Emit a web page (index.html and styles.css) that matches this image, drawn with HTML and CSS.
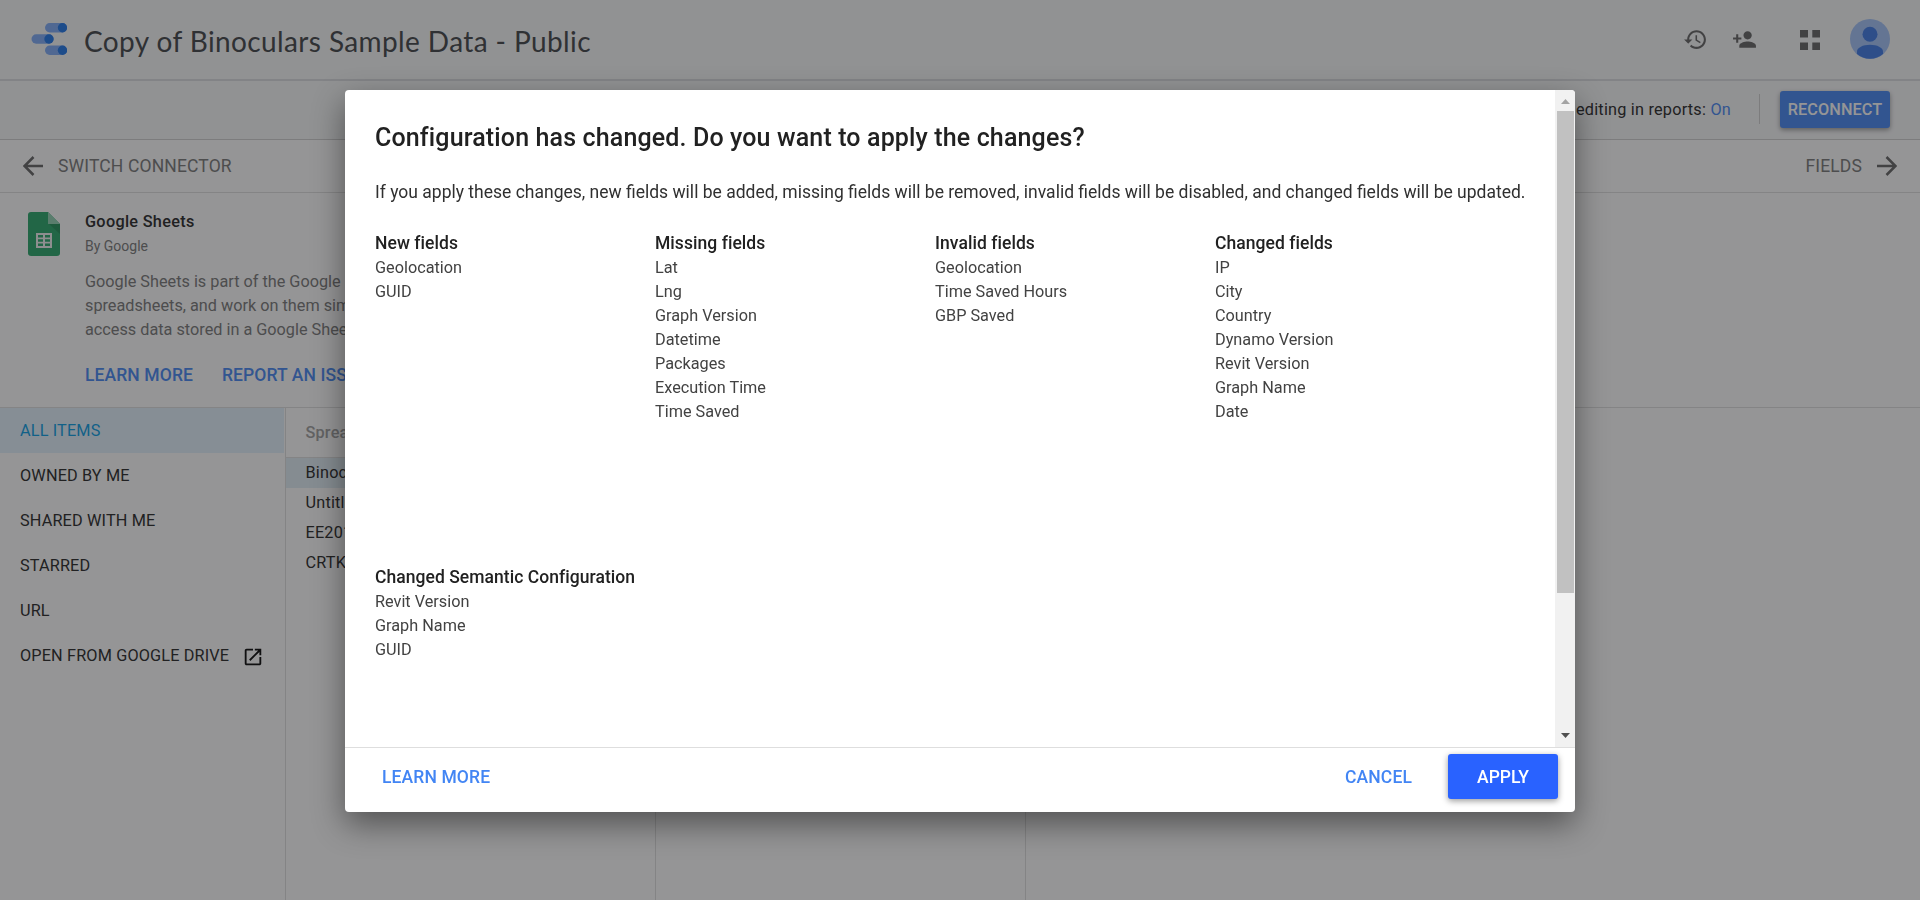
FILE: index.html
```html
<!DOCTYPE html>
<html lang="en">
<head>
<meta charset="utf-8">
<title>Copy of Binoculars Sample Data - Public</title>
<link rel="stylesheet" href="styles.css">
</head>
<body>
<div class="page">
  <header class="header">
    <svg class="logo" width="36" height="34" viewBox="0 0 36 34">
      <g fill="#7baaf7"><rect x="14" y="1" width="22" height="9.4" rx="4.7"/><rect x="0.5" y="12.3" width="22" height="9.4" rx="4.7"/><rect x="14" y="23.6" width="22" height="9.4" rx="4.7"/></g>
      <g fill="#1a73e8"><circle cx="31.5" cy="5.7" r="4.7"/><circle cx="18" cy="17" r="4.7"/><circle cx="31.5" cy="28.3" r="4.7"/></g>
    </svg>
    <h1 class="doc-title">Copy of Binoculars Sample Data - Public</h1>
    <div class="header-icons">
      <svg class="icon-history" width="25" height="25" viewBox="0 0 24 24"><path d="M13 3c-4.970 0-9 4.030-9 9H1l3.890 3.890.07.140L9 12H6c0-3.870 3.130-7 7-7s7 3.130 7 7-3.130 7-7 7c-1.930 0-3.680-.79-4.940-2.060l-1.420 1.420C8.270 19.990 10.510 21 13 21c4.970 0 9-4.030 9-9s-4.030-9-9-9zm-1 5v5l4.280 2.540.72-1.210-3.500-2.080V8H12z"/></svg>
      <svg class="icon-person" width="25" height="25" viewBox="0 0 24 24"><path d="M15 12c2.210 0 4-1.790 4-4s-1.790-4-4-4-4 1.790-4 4 1.790 4 4 4zm-9-2V7H4v3H1v2h3v3h2v-3h3v-2H6zm9 4c-2.670 0-8 1.340-8 4v2h16v-2c0-2.660-5.330-4-8-4z"/></svg>
      <svg class="icon-grid" width="20" height="20" viewBox="0 0 20 20"><path d="M0 0h8v7.500h-8zM12.300 0h7.700v7.500h-7.700zM0 12.500h8v7.500h-8zM12.300 12.500h7.700v7.500h-7.700z"/></svg>
      <svg class="avatar" width="40" height="40" viewBox="0 0 40 40"><circle cx="20" cy="20" r="20" fill="#a1c2fa"/><circle cx="20" cy="15.300" r="7.500" fill="#3b78e7"/><path fill="#3b78e7" d="M7 35v-2.500c0-4 6-6.800 13-6.800s13 2.800 13 6.800V35a20 20 0 0 1-26 0z"/></svg>
    </div>
  </header>
  <div class="toolbar">
    <span class="editing">Field editing in reports: <a class="link">On</a></span>
    <span class="divider"></span>
    <button class="reconnect">RECONNECT</button>
  </div>
  <nav class="steps">
    <div class="step"><svg width="20" height="20" viewBox="0 0 20 20"><path d="M20 10H2M10.500 1 1.500 10l9 9"/></svg><span class="step-switch">SWITCH CONNECTOR</span></div>
    <div class="step"><span>FIELDS</span><svg width="20" height="20" viewBox="0 0 20 20"><path d="M0 10h18M9.500 1l9 9-9 9"/></svg></div>
  </nav>
  <section class="connector">
    <svg class="sheets" width="32" height="44" viewBox="0 0 32 44">
      <path fill="#23a566" d="M3 0h17l12 12v29a3 3 0 0 1-3 3H3a3 3 0 0 1-3-3V3a3 3 0 0 1 3-3z"/>
      <path fill="#1c8f55" d="M21 12h11v10z"/><path fill="#8ed1b1" d="M20 0l12 12H20z"/>
      <path fill="#f1f1f1" d="M8 21h16v15H8z"/>
      <path fill="#23a566" d="M10 23h5v2.500h-5zM17 23h5v2.500h-5zM10 27.300h5v2.500h-5zM17 27.300h5v2.500h-5zM10 31.500h5v2.500h-5zM17 31.500h5v2.500h-5z"/>
    </svg>
    <div class="connector-info">
      <h2 class="connector-name">Google Sheets</h2>
      <p class="connector-by">By Google</p>
      <p class="connector-text">Google Sheets is part of the Google<br>spreadsheets, and work on them sim<br>access data stored in a Google Shee</p>
      <div class="connector-links"><a>LEARN MORE</a><a>REPORT AN ISSUE</a></div>
    </div>
  </section>
  <main class="browser">
    <ul class="sources">
      <li class="source source-active">ALL ITEMS</li>
      <li class="source">OWNED BY ME</li>
      <li class="source">SHARED WITH ME</li>
      <li class="source">STARRED</li>
      <li class="source">URL</li>
      <li class="source">OPEN FROM GOOGLE DRIVE <svg class="open-icon" width="22" height="22" viewBox="0 0 24 24"><path d="M19 19H5V5h7V3H5c-1.110 0-2 .9-2 2v14c0 1.100.89 2 2 2h14c1.100 0 2-.9 2-2v-7h-2v7zM14 3v2h3.590l-9.830 9.830 1.410 1.410L19 6.410V10h2V3h-7z"/></svg></li>
    </ul>
    <div class="files">
      <div class="files-head">Spreadsheet</div>
      <div class="file file-active">Binoculars</div>
      <div class="file">Untitled</div>
      <div class="file">EE2018</div>
      <div class="file">CRTKL</div>
    </div>
    <div class="column"></div>
  </main>
</div>
<div class="backdrop"></div>
<div class="dialog" role="dialog">
  <div class="dialog-scroll">
    <div class="dialog-content">
      <h2 class="dialog-title">Configuration has changed. Do you want to apply the changes?</h2>
      <p class="dialog-text">If you apply these changes, new fields will be added, missing fields will be removed, invalid fields will be disabled, and changed fields will be updated.</p>
      <div class="groups">
        <section><h3>New fields</h3><ul><li>Geolocation</li><li>GUID</li></ul></section>
        <section><h3>Missing fields</h3><ul><li>Lat</li><li>Lng</li><li>Graph Version</li><li>Datetime</li><li>Packages</li><li>Execution Time</li><li>Time Saved</li></ul></section>
        <section><h3>Invalid fields</h3><ul><li>Geolocation</li><li>Time Saved Hours</li><li>GBP Saved</li></ul></section>
        <section><h3>Changed fields</h3><ul><li>IP</li><li>City</li><li>Country</li><li>Dynamo Version</li><li>Revit Version</li><li>Graph Name</li><li>Date</li></ul></section>
        <section><h3>Changed Semantic Configuration</h3><ul><li>Revit Version</li><li>Graph Name</li><li>GUID</li></ul></section>
      </div>
    </div>
    <div class="scrollbar">
      <svg width="20" height="21" viewBox="0 0 20 21"><path fill="#a3a3a3" d="M6 14h9l-4.500-5z"/></svg>
      <div class="thumb"></div>
      <svg width="20" height="21" viewBox="0 0 20 21"><path fill="#505050" d="M6 7h9l-4.500 5z"/></svg>
    </div>
  </div>
  <footer class="dialog-actions">
    <a class="action action-learn">LEARN MORE</a>
    <a class="action action-cancel">CANCEL</a>
    <button class="apply">APPLY</button>
  </footer>
</div>
</body>
</html>
```
FILE: styles.css
```css
* { box-sizing: border-box; }
body { margin: 0; height: 900px; overflow: hidden; font: 16.25px/24px Roboto, sans-serif; color: #212121; }
h1, h2, h3, p, ul { margin: 0; padding: 0; font-weight: 400; }
ul { list-style: none; }
button { border: 0; border-radius: 3px; font-family: inherit; color: #fff; padding: 0; }
.page { height: 900px; display: flex; flex-direction: column; background: #fff; }

.header { height: 81px; flex: none; display: flex; align-items: center; padding: 0 30px 1px; background: #f8f9fa; border-bottom: 2px solid #dadce0; }
.logo { margin: 0 17px 0 1px; }
.doc-title { flex: 1; padding-top: 3px; font: 28px/36px Lato, sans-serif; letter-spacing: .39px; color: #3c4043; white-space: nowrap; }
.header-icons { display: flex; align-items: center; fill: #616161; }
.icon-history { margin-right: 24px; }
.icon-person { margin-right: 43px; }
.icon-grid { margin: 1px 30px 0 0; }

.toolbar { height: 59px; flex: none; display: flex; align-items: center; justify-content: flex-end; padding: 0 30px 2px; background: #f8f9fa; border-bottom: 1px solid #d0d0d0; letter-spacing: .22px; }
.editing { padding-top: 1px; }
.link { color: #4285f4; }
.divider { width: 1px; height: 30px; background: #d0d0d0; margin: 0 20px 0 28px; }
.reconnect { width: 110px; height: 37px; font-size: 16.25px; font-weight: 500; letter-spacing: .1px; background: #4285f4; box-shadow: 0 2px 5px rgba(0,0,0,.4); }

.steps { height: 53px; flex: none; display: flex; align-items: center; justify-content: space-between; padding: 0 23px; border-bottom: 1px solid #dedede; color: #757575; font-size: 17.5px; letter-spacing: .15px; }
.step { display: flex; align-items: center; gap: 15px; }
.step svg { fill: none; stroke: #616161; stroke-width: 2.5; }

.connector { height: 215px; flex: none; display: flex; align-items: flex-start; padding: 17px 28px 0; border-bottom: 1px solid #dedede; }
.sheets { margin: 2px 25px 0 0; }
.connector-name { font-size: 16.25px; font-weight: 500; letter-spacing: .3px; }
.connector-by { font-size: 14px; color: #757575; }
.connector-text { margin-top: 12px; color: #757575; }
.connector-links { display: flex; gap: 29px; margin-top: 21px; font-size: 17.5px; font-weight: 500; letter-spacing: .1px; color: #4285f4; white-space: nowrap; }

.browser { flex: 1; display: flex; }
.sources { width: 286px; border-right: 1px solid #dedede; padding-right: 1px; }
.source { height: 45px; display: flex; align-items: center; padding-left: 20px; letter-spacing: .15px; }
.source-active { background: #e3f2fd; color: #039be5; }
.open-icon { margin: 2px 0 0 13px; fill: #000; }
.files { width: 370px; border-right: 1px solid #dedede; letter-spacing: .2px; }
.files-head { height: 50px; padding: 13px 19.5px; border-bottom: 1px solid #dedede; font-weight: 500; color: #9e9e9e; }
.file { height: 30px; padding: 3px 19.5px; }
.file-active { background: #e1eef6; }
.column { width: 370px; border-right: 1px solid #dedede; }

.backdrop { position: fixed; inset: 0; background: rgba(33,33,36,.48); }
.dialog { position: absolute; left: 345px; top: 90px; width: 1230px; height: 722px; display: flex; flex-direction: column; background: #fff; border-radius: 4px; overflow: hidden; box-shadow: 0 12px 32px rgba(0,0,0,.45); }
.dialog-scroll { height: 657px; display: flex; }
.dialog-content { flex: 1; min-width: 0; padding: 33px 30px 0; }
.dialog-title { font-size: 25px; line-height: 30px; font-weight: 500; letter-spacing: .14px; white-space: nowrap; }
.dialog-text { margin-top: 27px; font-size: 17.5px; white-space: nowrap; color: #303030; }
.groups { display: grid; grid-template-columns: repeat(4, 280px); grid-template-rows: 334px auto; margin-top: 27px; color: #424242; }
.groups h3 { font-size: 17.5px; line-height: 25px; font-weight: 500; letter-spacing: .05px; color: #212121; white-space: nowrap; }
.scrollbar { width: 20px; display: flex; flex-direction: column; background: #f1f1f1; }
.thumb { width: 17px; height: 482px; margin: 0 0 133px 2px; background: #c1c1c1; }
.dialog-actions { flex: 1; display: flex; align-items: center; padding: 0 17px 7px 37px; border-top: 1px solid #dedede; }
.action { font-size: 17.5px; font-weight: 500; letter-spacing: .12px; color: #4285f4; }
.action-cancel { margin: 0 36px 0 auto; }
.apply { width: 110px; height: 45px; font-size: 17.5px; font-weight: 500; background: #2962ff; box-shadow: 0 2px 6px rgba(0,0,0,.4); }
```
